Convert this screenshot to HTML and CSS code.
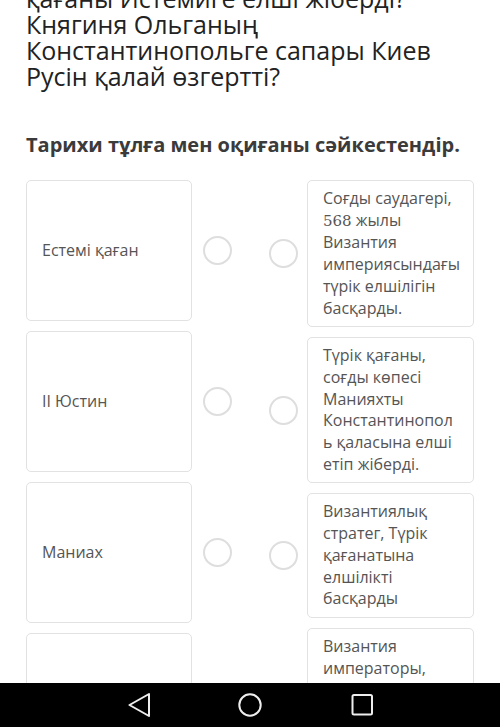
FILE: index.html
```html
<!DOCTYPE html>
<html lang="kk">
<head>
<meta charset="utf-8">
<link rel="stylesheet" href="styles.css">
</head>
<body>
<div class="page">
  <h1 class="question">қағаны Истемиге елші жіберді? Княгиня Ольганың Константинопольге сапары Киев Русін қалай өзгертті?</h1>
  <h2 class="task">Тарихи тұлға мен оқиғаны сәйкестендір.</h2>
  <div class="match">
    <div class="col col-left">
      <div class="item">
        <div class="card card-term">Естемі қаған</div>
        <span class="dot"></span>
      </div>
      <div class="item">
        <div class="card card-term">ІІ Юстин</div>
        <span class="dot"></span>
      </div>
      <div class="item">
        <div class="card card-term">Маниах</div>
        <span class="dot"></span>
      </div>
      <div class="item">
        <div class="card card-term">Земарх</div>
        <span class="dot"></span>
      </div>
    </div>
    <div class="col col-right">
      <div class="item">
        <span class="dot"></span>
        <div class="card card-def">Соғды саудагері, <span class="serif">568</span> жылы Византия империясындағы түрік елшілігін басқарды.</div>
      </div>
      <div class="item">
        <span class="dot"></span>
        <div class="card card-def">Түрік қағаны, соғды көпесі Манияхты Константинопол ь қаласына елші етіп жіберді.</div>
      </div>
      <div class="item">
        <span class="dot"></span>
        <div class="card card-def">Византиялық стратег, Түрік қағанатына елшілікті басқарды</div>
      </div>
      <div class="item">
        <span class="dot"></span>
        <div class="card card-def">Византия императоры, Византия елшілігін Түрік қағанатына жіберді.</div>
      </div>
    </div>
  </div>
</div>
<nav class="navbar">
  <svg class="nav-icon" width="24" height="24" viewBox="0 0 24 24"><path d="M22 1 L2.5 12 L22 23 Z" fill="none" stroke="#eee" stroke-width="2" stroke-linejoin="round"/></svg>
  <svg class="nav-icon" width="24" height="24" viewBox="0 0 24 24"><circle cx="12" cy="12" r="10.7" fill="none" stroke="#eee" stroke-width="2"/></svg>
  <svg class="nav-icon" width="24" height="24" viewBox="0 0 24 24"><rect x="2.5" y="2" width="19.5" height="19.5" rx="1.5" fill="none" stroke="#eee" stroke-width="2"/></svg>
</nav>
</body>
</html>
```
FILE: styles.css
```css
html, body {
  margin: 0;
  padding: 0;
  background: #fff;
}
body {
  font-family: "Open Sans", "Noto Sans", sans-serif;
  width: 500px;
  height: 727px;
  overflow: hidden;
}
.page {
  padding: 0 26px;
}
.question {
  margin: -15px 0 0;
  font-size: 25px;
  line-height: 26px;
  font-weight: 400;
  color: #222;
}
.task {
  margin: 42px 0 0;
  font-size: 20px;
  line-height: 28px;
  font-weight: 700;
  color: #3b3b3b;
}
.match {
  margin-top: 21px;
  display: flex;
  gap: 37px;
  align-items: flex-start;
}
.col {
  display: flex;
  flex-direction: column;
  gap: 10px;
}
.col-left { width: 206px; }
.col-right { width: 205px; }
.item {
  display: flex;
  align-items: center;
}
.col-left .item { gap: 11px; }
.col-right .item { gap: 9px; }
.card {
  box-sizing: border-box;
  border: 1px solid #e2e2e2;
  border-radius: 5px;
  background: #fff;
  font-size: 16px;
  line-height: 21.7px;
  color: #555;
}
.card-term {
  width: 166px;
  height: 141px;
  padding: 0 15px;
  display: flex;
  align-items: center;
}
.card-def {
  width: 167px;
  padding: 7px 14px 7px 15px;
}
.serif {
  font-family: "DejaVu Serif", "Liberation Serif", serif;
  font-size: 15px;
}
.dot {
  box-sizing: border-box;
  width: 29px;
  height: 29px;
  flex: none;
  border: 2.5px solid #dedede;
  border-radius: 50%;
  background: #fff;
}
.navbar {
  position: fixed;
  left: 0;
  right: 0;
  bottom: 0;
  height: 44px;
  background: #000;
  display: flex;
  align-items: center;
  justify-content: center;
  gap: 87.5px;
}
.nav-icon {
  display: block;
}
```
